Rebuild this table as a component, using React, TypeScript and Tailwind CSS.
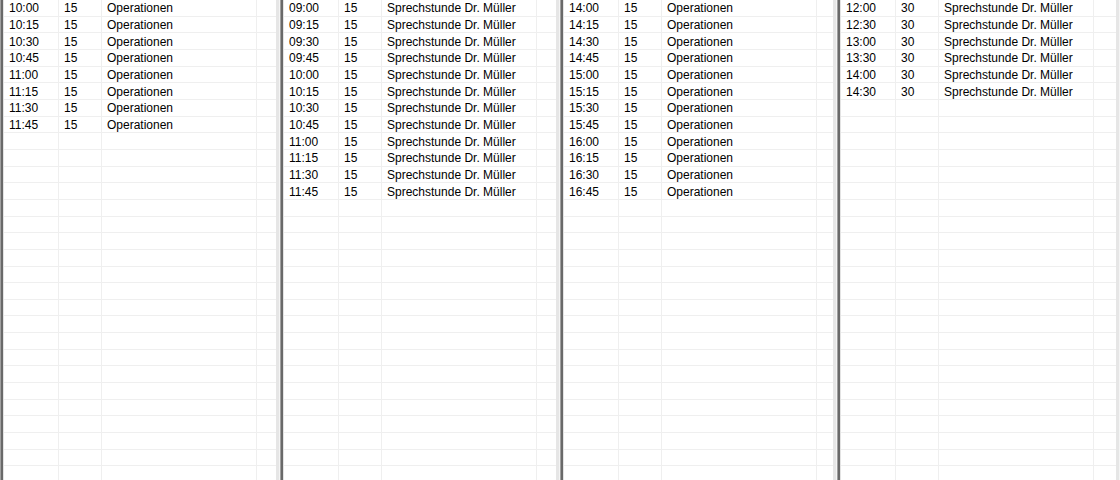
import React from 'react';

type Entry = { time: string; dur: string; label: string };

function slots(startH: number, startM: number, count: number, step: number, label: string): Entry[] {
  const out: Entry[] = [];
  for (let i = 0; i < count; i++) {
    const total = startH * 60 + startM + i * step;
    const h = String(Math.floor(total / 60)).padStart(2, '0');
    const m = String(total % 60).padStart(2, '0');
    out.push({ time: `${h}:${m}`, dur: String(step), label });
  }
  return out;
}

const panels: Entry[][] = [
  slots(10, 0, 8, 15, 'Operationen'),
  slots(9, 0, 12, 15, 'Sprechstunde Dr. Müller'),
  slots(14, 0, 12, 15, 'Operationen'),
  slots(12, 0, 6, 30, 'Sprechstunde Dr. Müller'),
];

const widths = ['w-[280px]', 'w-[280px]', 'w-[277px]', 'w-[283px]'];

const ROWS = 29;

function Panel({ entries, width }: { entries: Entry[]; width: string }) {
  const rows = Array.from({ length: ROWS }, (_, i) => entries[i]);
  return (
    <div className={`flex h-full shrink-0 bg-white ${width}`}>
      {/* sunken left border */}
      <div className="w-px bg-[#a0a0a0]" />
      <div className="w-[2px] bg-[#696969]" />
      <div className="w-px bg-[#e3e3e3]" />

      <div className="flex flex-1 flex-col overflow-hidden">
        {rows.map((r, i) => (
          <div key={i} className="flex h-[16.667px] shrink-0 border-b border-[#efefef]">
            <div className="flex w-[55px] items-center border-r border-[#efefef] pt-px pl-[5px]">{r?.time}</div>
            <div className="flex w-[43px] items-center border-r border-[#efefef] pt-px pl-[5px]">{r?.dur}</div>
            <div className="flex w-[155px] items-center whitespace-nowrap border-r border-[#efefef] pt-px pl-[5px]">{r?.label}</div>
            <div className="flex-1" />
          </div>
        ))}
      </div>

      {/* right edge */}
      <div className="w-[3px] bg-[#e6e6e6]" />
      <div className="w-px bg-[#f4f4f4]" />
    </div>
  );
}

export default function App() {
  return (
    <div className="flex h-[480px] w-[1120px] overflow-hidden bg-white text-[12px] leading-none text-black [font-family:'Liberation_Sans',Arial,sans-serif]">
      {panels.map((p, i) => (
        <Panel key={i} entries={p} width={widths[i]} />
      ))}
    </div>
  );
}
